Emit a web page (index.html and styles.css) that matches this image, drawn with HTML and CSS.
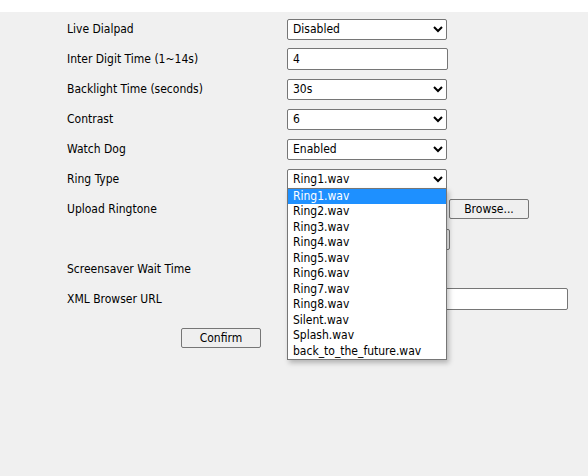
FILE: index.html
```html
<!DOCTYPE html>
<html>
<head>
<meta charset="utf-8">
<link rel="stylesheet" href="styles.css">
</head>
<body>
<div class="topbar"></div>
<div class="main">
  <div class="form">
    <div class="label">Live Dialpad</div>
    <div class="ctrl"><select class="sel"><option>Disabled</option></select></div>

    <div class="label">Inter Digit Time (1~14s)</div>
    <div class="ctrl"><input class="txt" type="text" value="4"></div>

    <div class="label">Backlight Time (seconds)</div>
    <div class="ctrl"><select class="sel"><option>30s</option></select></div>

    <div class="label">Contrast</div>
    <div class="ctrl"><select class="sel"><option>6</option></select></div>

    <div class="label">Watch Dog</div>
    <div class="ctrl"><select class="sel"><option>Enabled</option></select></div>

    <div class="label">Ring Type</div>
    <div class="ctrl ring">
      <select class="sel"><option>Ring1.wav</option></select>
      <ul class="popup">
        <li class="hl">Ring1.wav</li>
        <li>Ring2.wav</li>
        <li>Ring3.wav</li>
        <li>Ring4.wav</li>
        <li>Ring5.wav</li>
        <li>Ring6.wav</li>
        <li>Ring7.wav</li>
        <li>Ring8.wav</li>
        <li>Silent.wav</li>
        <li>Splash.wav</li>
        <li>back_to_the_future.wav</li>
      </ul>
    </div>

    <div class="label">Upload Ringtone</div>
    <div class="ctrl file"><span class="filebox"></span><button class="btn browse">Browse...</button></div>

    <div class="label"></div>
    <div class="ctrl"><button class="btn upload">Upload</button></div>

    <div class="label">Screensaver Wait Time</div>
    <div class="ctrl"><select class="sel"><option>Off</option></select></div>

    <div class="label">XML Browser URL</div>
    <div class="ctrl"><input class="txt wide" type="text" value=""></div>
  </div>
  <div class="actions"><button class="btn confirm">Confirm</button></div>
</div>
</body>
</html>
```

FILE: styles.css
```css
html, body {
  margin: 0;
  padding: 0;
  background: #f0f0f0;
  font-family: "DejaVu Sans Condensed", "Liberation Sans", sans-serif;
  font-size: 12px;
  color: #000;
}
.topbar {
  height: 12px;
  background: #fff;
}
.main {
  height: 464px;
  padding: 2px 0 0 67px;
  box-sizing: border-box;
}
.form {
  display: grid;
  grid-template-columns: 220px 300px;
  grid-auto-rows: 30px;
  align-items: center;
}
.ctrl {
  display: flex;
  align-items: center;
}
.sel {
  width: 160px;
  height: 21px;
  font: 12px "DejaVu Sans Condensed", "Liberation Sans", sans-serif;
  border: 1px solid #767676;
  border-radius: 2px;
  background: #fff;
  color: #000;
  padding: 0 1px;
}
.txt {
  width: 161px;
  height: 22px;
  box-sizing: border-box;
  font: 12px "DejaVu Sans Condensed", "Liberation Sans", sans-serif;
  border: 1px solid #767676;
  border-radius: 2px;
  padding: 0 5px;
  color: #000;
}
.txt.wide {
  width: 281px;
}
.btn {
  font: 12px "DejaVu Sans Condensed", "Liberation Sans", sans-serif;
  color: #000;
  background: #efefef;
  border: 1px solid #767676;
  border-radius: 2px;
  height: 20px;
  padding: 0;
}
.filebox {
  width: 160px;
  height: 20px;
}
.browse {
  width: 80px;
  margin-left: 2px;
}
.upload {
  width: 163px;
  height: 21px;
}
.ring {
  position: relative;
}
.popup {
  position: absolute;
  left: 0;
  top: 19px;
  width: 160px;
  margin: 0;
  padding: 0;
  list-style: none;
  background: #fff;
  border: 1px solid #767676;
  box-sizing: border-box;
  box-shadow: 2px 3px 5px rgba(0, 0, 0, 0.25);
  z-index: 5;
}
.popup li {
  height: 15.5px;
  line-height: 15.5px;
  padding-left: 5px;
}
.popup li.hl {
  background: #1e90ff;
  color: #fff;
}
.actions {
  padding: 14px 0 0 114px;
}
.confirm {
  width: 80px;
  height: 20px;
}
```
